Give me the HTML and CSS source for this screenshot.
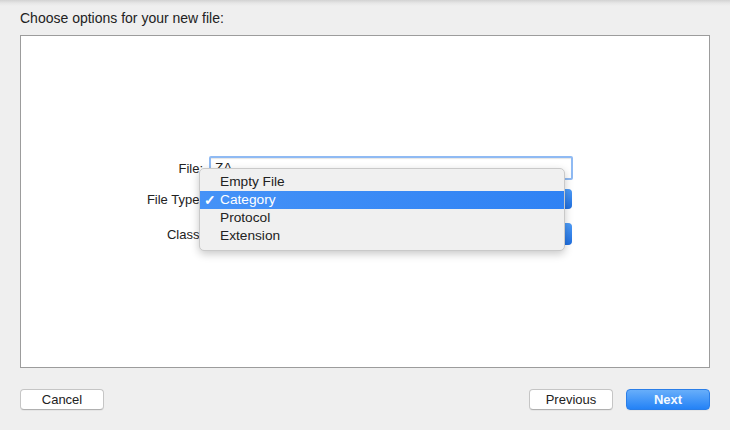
FILE: index.html
```html
<!DOCTYPE html>
<html>
<head>
<meta charset="utf-8">
<link rel="stylesheet" href="styles.css">
</head>
<body>
<div class="sheet">
  <div class="title">Choose options for your new file:</div>
  <div class="panel">
    <div class="form">
      <div class="label row1">File:</div>
      <div class="field row1"><div class="textfield">ZA</div></div>
      <div class="label row2">File Type:</div>
      <div class="field row2"><div class="popup"><span class="cap"></span></div></div>
      <div class="label row3">Class:</div>
      <div class="field row3"><div class="popup"><span class="cap"></span></div></div>
    </div>
    <div class="menu">
      <div class="item">Empty File</div>
      <div class="item selected"><span class="check">✓</span>Category</div>
      <div class="item">Protocol</div>
      <div class="item">Extension</div>
    </div>
  </div>
  <div class="footer">
    <button class="btn">Cancel</button>
    <div class="right">
      <button class="btn">Previous</button>
      <button class="btn primary">Next</button>
    </div>
  </div>
</div>
</body>
</html>
```
FILE: styles.css
```css
html, body {
  margin: 0;
  padding: 0;
}
body {
  width: 730px;
  height: 430px;
  overflow: hidden;
  background: linear-gradient(to bottom, #d2d2d2 0px, #e6e6e6 3px, #efefef 6px, #efefef 100%);
  font-family: "Liberation Sans", Arial, sans-serif;
  font-size: 13px;
  color: #222;
}
.sheet {
  padding: 10px 20px 0 20px;
}
.title {
  font-size: 14px;
  line-height: 17px;
  height: 17px;
  margin-bottom: 8px;
}
.panel {
  position: relative;
  height: 331px;
  background: #fff;
  border: 1px solid #9c9c9c;
  box-sizing: content-box;
  width: 688px;
}
.form {
  display: grid;
  grid-template-columns: 182px 364px;
  column-gap: 6px;
  padding-top: 120px;
}
.label {
  text-align: right;
  display: flex;
  align-items: center;
  justify-content: flex-end;
}
.field {
  display: flex;
  align-items: center;
}
.row1 { height: 24px; margin-bottom: 9px; }
.row2 { height: 20px; margin-bottom: 14px; }
.row3 { height: 22px; }
.textfield {
  box-sizing: border-box;
  width: 364px;
  height: 24px;
  border: 2px solid #8fbaf3;
  border-radius: 2px;
  padding-left: 4px;
  line-height: 20px;
  font-size: 13.5px;
  background: #fff;
  box-shadow: inset 0 1px 1px rgba(0,0,0,0.1);
}
.popup {
  position: relative;
  box-sizing: border-box;
  width: 363px;
  height: 100%;
  background: #fff;
  border: 1px solid #c4c4c4;
  border-radius: 4px;
}
.cap {
  position: absolute;
  right: -1px;
  top: -1px;
  bottom: -1px;
  width: 17px;
  border-radius: 0 4px 4px 0;
  background: linear-gradient(to bottom, #4e9cf8, #1f6fe0);
}
.menu {
  position: absolute;
  left: 178px;
  top: 132px;
  width: 366px;
  box-sizing: border-box;
  padding: 4px 0 5px 0;
  background: #f0f0f0;
  border: 1px solid #c9c9c9;
  border-radius: 5px;
  box-shadow: 0 3px 9px rgba(0,0,0,0.22);
}
.item {
  position: relative;
  height: 18px;
  line-height: 18px;
  padding-left: 20px;
  font-size: 13.7px;
  color: #222;
}
.item.selected {
  background: linear-gradient(to right, #4592f7, #2f82f4);
  color: #fff;
}
.check {
  position: absolute;
  left: 4px;
  top: 0;
  font-size: 14px;
  font-weight: bold;
}
.footer {
  display: flex;
  justify-content: space-between;
  margin-top: 21px;
}
.right {
  display: flex;
  gap: 13px;
}
.btn {
  box-sizing: border-box;
  width: 84px;
  height: 21px;
  font-family: "Liberation Sans", Arial, sans-serif;
  font-size: 13px;
  color: #222;
  background: #fff;
  border: 1px solid #c5c5c5;
  border-bottom-color: #b0b0b0;
  border-radius: 4px;
  padding: 0;
  box-shadow: 0 1px 0 rgba(0,0,0,0.04);
}
.btn.primary {
  background: linear-gradient(to bottom, #67aefa, #2482f6);
  border-color: #2a7ee8;
  font-weight: bold;
  color: #f4f9ff;
}
```
